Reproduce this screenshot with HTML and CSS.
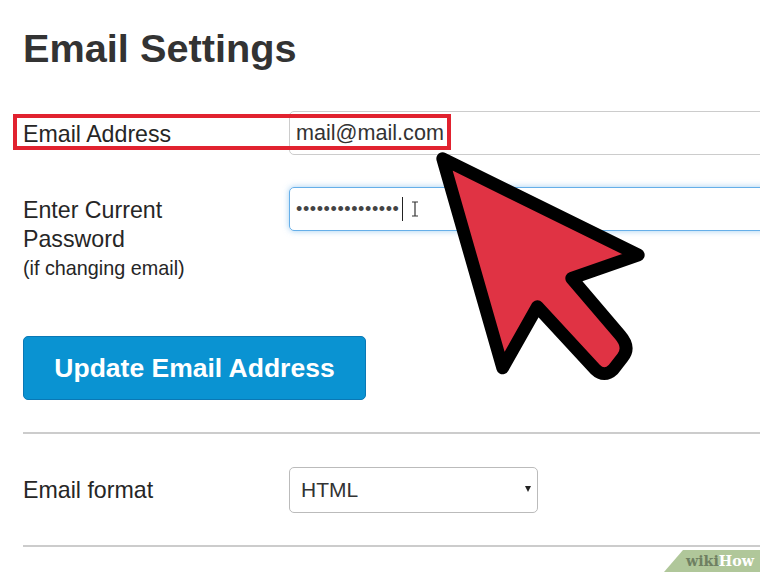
FILE: index.html
```html
<!DOCTYPE html>
<html lang="en">
<head>
    <meta charset="UTF-8">
    <title>Email Settings</title>
    <link rel="stylesheet" href="styles.css">
</head>
<body>

    <div class="page">
        <h1>Email Settings</h1>

        <div class="form-row">
            <label class="field-label" for="email">Email Address</label>
            <input class="field" id="email" type="text" value="mail@mail.com">
        </div>

        <div class="form-row">
            <label class="field-label">Enter Current Password <small>(if changing email)</small></label>
            <div class="field field-focus">
                <span class="dots">•••••••••••••••</span>
                <span class="caret"></span>
                <svg class="ibeam" width="8" height="16" viewBox="0 0 8 16">
                    <path d="M1 1h6M4 1v14M1 15h6" fill="none" stroke="#333" stroke-width="1.2"/>
                </svg>
            </div>
        </div>

        <button class="update-btn">Update Email Address</button>

        <hr>

        <div class="form-row format-row">
            <label class="field-label" for="format">Email format</label>
            <div class="select-wrap">
                <select id="format">
                    <option>HTML</option>
                </select>
            </div>
        </div>

        <hr>
    </div>

    <!-- annotation drawn over the page -->
    <div class="highlight"></div>

    <svg class="arrow" width="240" height="250" viewBox="0 0 720 750">
        <path d="M68 56 L655 345 L455 415 L600 585 Q632 622 608 652 L580 688 Q553 714 526 688 L352 500 L248 684 Z"
              fill="#e03344" stroke="#000" stroke-width="38" stroke-linejoin="round"/>
    </svg>

    <div class="badge"><span class="wiki">wiki</span><span class="how">How</span></div>

</body>
</html>
```

FILE: styles.css
```css
html, body {
    margin: 0;
    height: 572px;
    overflow: hidden;
    background-color: #fff;
}
body {
    position: relative;
    font-family: "Liberation Sans", Arial, sans-serif;
    color: #262626;
}
.page {
    padding: 28px 0 0 23px;
}
h1 {
    margin: 0 0 43px;
    font-size: 39.7px;
    line-height: 40px;
    font-weight: bold;
    color: #333;
}
.form-row {
    display: grid;
    grid-template-columns: 266px 1fr;
    margin-bottom: 32px;
}
.field-label {
    display: block;
    padding-top: 9px;
    width: 180px;
    font-size: 23.2px;
    line-height: 29px;
}
.field-label small {
    display: block;
    font-size: 19.8px;
    line-height: 29px;
}
.field {
    box-sizing: border-box;
    width: calc(100% + 20px);
    height: 44px;
    padding: 0 6px;
    border: 1px solid #ccc;
    border-radius: 5px;
    font-family: inherit;
    font-size: 21.6px;
    color: #333;
    outline: none;
}
.field-focus {
    display: flex;
    align-items: center;
    border-color: #66afe9;
    box-shadow: 0 0 6px rgba(102, 175, 233, 0.6);
}
.dots {
    font-size: 18px;
    letter-spacing: 0.6px;
    color: #444;
    margin-right: 2px;
}
.caret {
    width: 1px;
    height: 24px;
    background-color: #222;
}
.ibeam {
    margin-left: 8px;
}
.update-btn {
    display: block;
    width: 343px;
    height: 64px;
    margin-top: 53px;
    padding: 0;
    border: 1px solid #0a78b5;
    border-radius: 5px;
    background-color: #0a93d2;
    color: #fff;
    font-family: inherit;
    font-size: 26.5px;
    font-weight: bold;
}
hr {
    height: 2px;
    margin: 32px 0 33px;
    border: none;
    background-color: #ccc;
}
.format-row {
    margin-bottom: 0;
}
.select-wrap {
    position: relative;
    width: 249px;
}
.select-wrap::after {
    content: "";
    position: absolute;
    right: 7px;
    top: 19px;
    border-left: 3px solid transparent;
    border-right: 3px solid transparent;
    border-top: 6px solid #222;
}
select {
    display: block;
    box-sizing: border-box;
    width: 100%;
    height: 46px;
    padding: 0 11px 2px;
    border: 1px solid #bbb;
    border-radius: 5px;
    background-color: #fff;
    font-family: inherit;
    font-size: 21px;
    color: #333;
    appearance: none;
}
.highlight {
    position: absolute;
    left: 13px;
    top: 114px;
    width: 430px;
    height: 28px;
    border: 4px solid #e1222f;
}
.arrow {
    position: absolute;
    left: 420px;
    top: 140px;
}
.badge {
    position: absolute;
    right: 0;
    bottom: 0;
    box-sizing: border-box;
    width: 96px;
    height: 22px;
    padding-left: 22px;
    background-color: #b0c79a;
    clip-path: polygon(19px 0, 100% 0, 100% 100%, 0 100%);
    font-family: "DejaVu Serif", serif;
    font-size: 14.2px;
    font-weight: bold;
    line-height: 22px;
}
.wiki {
    color: #6f8062;
}
.how {
    color: #fff;
}
```
